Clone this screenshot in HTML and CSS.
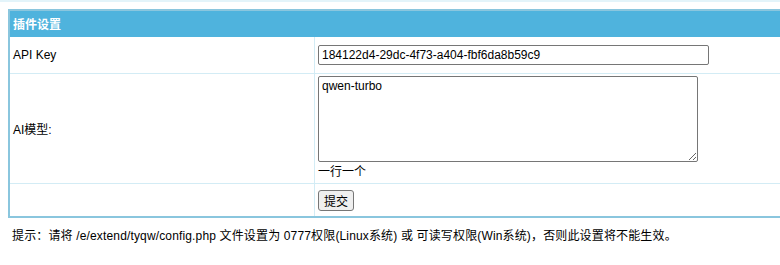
FILE: index.html
```html
<!DOCTYPE html>
<html lang="zh-CN">
<head>
  <meta charset="UTF-8" />
  <title>插件设置</title>
  <link rel="stylesheet" href="styles.css">
</head>
<body>
  <div class="topline"></div>
  <form class="wrap" method="post">
    <table class="tb">
      <tr class="header">
        <td colspan="2">插件设置</td>
      </tr>
      <tr class="row-key">
        <td class="label">API Key</td>
        <td><input type="text" name="apikey" class="ipt" value="184122d4-29dc-4f73-a404-fbf6da8b59c9" /></td>
      </tr>
      <tr class="row-model">
        <td class="label">AI模型:</td>
        <td>
          <textarea name="models" class="area">qwen-turbo</textarea>
          <div class="tip">一行一个</div>
        </td>
      </tr>
      <tr class="row-btn">
        <td></td>
        <td><button type="submit" class="btn">提交</button></td>
      </tr>
    </table>
  </form>
  <p class="note">提示：请将 /e/extend/tyqw/config.php 文件设置为 0777权限(Linux系统) 或 可读写权限(Win系统)，否则此设置将不能生效。</p>
</body>
</html>
```

FILE: styles.css
```css
html, body {
  overflow: hidden;
}
body {
  margin: 0;
  font-family: "Liberation Sans", "Noto Sans CJK SC", sans-serif;
  font-size: 12px;
  color: #000;
  background: #fff;
}
.topline {
  height: 2px;
  background: #e3f4fa;
}
.wrap {
  margin: 7px 0 0 8px;
  width: 800px;
}
.tb {
  width: 100%;
  border-collapse: collapse;
  border: 2px solid #8ac6de;
}
.tb td {
  border: 1px solid #d3ecf5;
  padding: 0 3px;
}
.header td {
  background: #4fb3dd;
  color: #fff;
  font-weight: bold;
  height: 25px;
  border-color: #4fb3dd;
}
.label {
  width: 298px;
}
.row-key td {
  height: 36px;
}
.row-btn td {
  height: 32px;
}
.ipt {
  width: 383px;
  height: 16px;
  margin: 0;
  padding: 1px 3px;
  border: 1px solid #767676;
  border-radius: 2px;
  font: inherit;
  vertical-align: middle;
}
.area {
  display: block;
  width: 372px;
  height: 80px;
  margin: 2px 0 0;
  padding: 2px 3px;
  border: 1px solid #767676;
  border-radius: 2px;
  font: inherit;
  resize: both;
}
.tip {
  line-height: 21px;
}
.btn {
  font: inherit;
  padding: 1px 5px;
  border: 1px solid #767676;
  border-radius: 3px;
  background: #efefef;
}
.note {
  margin: 8px 0 0 12px;
  letter-spacing: 0.15px;
}
```
